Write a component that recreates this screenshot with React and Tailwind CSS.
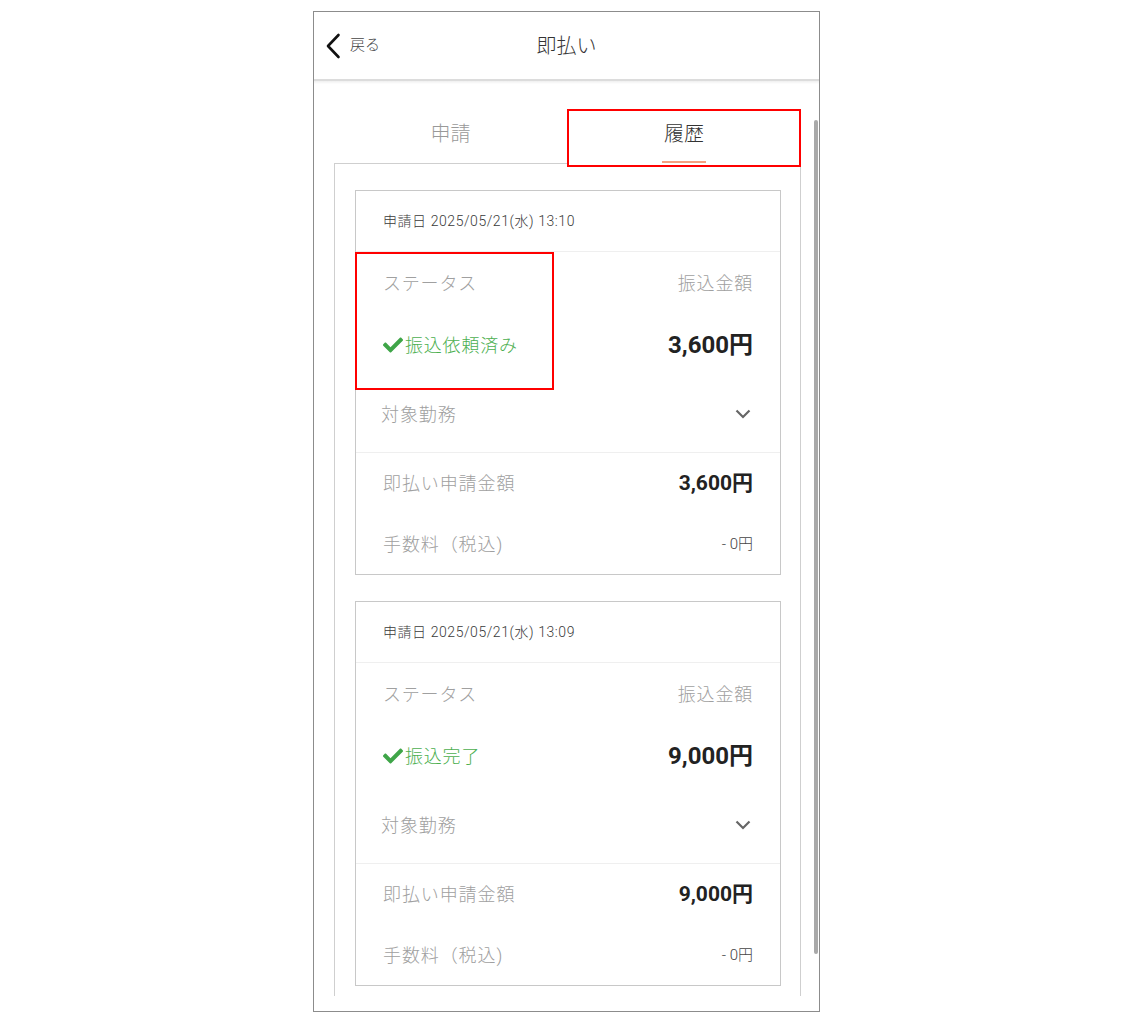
import React from 'react'

const records = [
    { date: '2025/05/21(水) 13:10', status: '振込依頼済み', amount: '3,600円', fee: '- 0円', marked: true },
    { date: '2025/05/21(水) 13:09', status: '振込完了', amount: '9,000円', fee: '- 0円', marked: false },
]

function Check() {
    return (
        <svg viewBox="0 0 512 512" className="w-[20px] h-[20px] mr-[2px]" fill="#3fa548">
            <path d="M173.9 439.4l-166.4-166.4c-10-10-10-26.2 0-36.2l36.2-36.2c10-10 26.2-10 36.2 0L192 312.7 432.1 72.6c10-10 26.2-10 36.2 0l36.2 36.2c10 10 10 26.2 0 36.2L210.1 439.4c-10 10-26.2 10-36.2 0z" />
        </svg>
    )
}

function HistoryCard({ record }) {
    return (
        <div className="relative border border-[#c8c8c8] bg-white">
            {/* annotation */}
            {record.marked && (
                <div className="absolute left-[-1px] top-[61px] w-[199px] h-[138px] border-2 border-[#ff0000] pointer-events-none" />
            )}
            <div className="h-[61px] flex items-center px-[27px] text-[14px] tracking-[0.04em] text-[#3a3a3a] font-light border-b border-[#efefef]">
                申請日 {record.date}
            </div>
            <div className="px-[27px] tracking-[0.05em]">
                <div className="h-[62px] flex items-center justify-between text-[18px] font-light text-[#a0a0a0]">
                    <span>ステータス</span>
                    <span>振込金額</span>
                </div>
                <div className="h-[62px] flex items-center justify-between">
                    <span className="flex items-center text-[18px] font-light text-[#4caf50]">
                        <Check />
                        {record.status}
                    </span>
                    <span className="text-[24px] font-bold text-[#222] tracking-normal">{record.amount}</span>
                </div>
            </div>
            <div className="h-[77px] flex items-center justify-between pl-[25px] pr-[29px] border-b border-[#efefef]">
                <span className="text-[18px] tracking-[0.05em] font-light text-[#a0a0a0]">対象勤務</span>
                <svg viewBox="0 0 16 10" className="w-[16px] h-[10px]" fill="none" stroke="#666" strokeWidth="2.2">
                    <path d="M1.5 1.5 8 8l6.5-6.5" />
                </svg>
            </div>
            <div className="px-[27px]">
                <div className="h-[61px] flex items-center justify-between">
                    <span className="text-[18px] tracking-[0.05em] font-light text-[#a0a0a0]">即払い申請金額</span>
                    <span className="text-[21px] font-bold text-[#222]">{record.amount}</span>
                </div>
                <div className="h-[60px] flex items-center justify-between">
                    <span className="text-[18px] tracking-[0.05em] font-light text-[#a0a0a0]">手数料（税込)</span>
                    <span className="text-[15px] font-light text-[#444]">{record.fee}</span>
                </div>
            </div>
        </div>
    )
}

export default function App() {
    return (
        <div className="min-h-[1021px] bg-white pt-[11px] font-['Roboto','Noto_Sans_CJK_JP',sans-serif]">
            <div className="ml-[313px] w-[507px] h-[1001px] border border-[#8c8c8c] flex flex-col overflow-hidden">
                {/* Header */}
                <div className="h-[67px] flex items-center relative shrink-0">
                    <div className="flex items-center pl-[11px] gap-[9px]">
                        <svg viewBox="0 0 16 26" className="w-[16px] h-[26px]" fill="none" stroke="#111" strokeWidth="2.6" strokeLinecap="round" strokeLinejoin="round">
                            <path d="M13.5 2 3 13l10.5 11" />
                        </svg>
                        <span className="text-[15px] font-light text-[#444]">戻る</span>
                    </div>
                    <div className="absolute inset-x-0 text-center text-[20px] font-light text-[#333] pointer-events-none">即払い</div>
                </div>
                <div className="h-[2px] bg-[#dcdcdc] shrink-0" />
                <div className="h-[3px] bg-gradient-to-b from-[#efefef] to-white shrink-0" />

                {/* Body */}
                <div className="flex flex-1 min-h-0">
                    <div className="flex flex-col pl-[20px] w-[487px] pt-[25px] pb-[15px]">
                        <div className="flex h-[55px] shrink-0">
                            <div className="w-[233px] flex items-center justify-center border-b border-[#cfcfcf] text-[20px] font-light text-[#999] pb-[5px]">
                                申請
                            </div>
                            <div className="relative w-[234px] flex flex-col items-center justify-end">
                                <span className="text-[20px] font-light text-[#333] mb-[12px]">履歴</span>
                                <div className="w-[44px] h-[2px] bg-[#f5a07f] mb-[1px]" />
                                {/* annotation */}
                                <div className="absolute left-0 top-0 w-[234px] h-[58px] border-2 border-[#ff0000] pointer-events-none" />
                            </div>
                        </div>
                        <div className="flex-1 min-h-0 overflow-hidden border-x border-[#cfcfcf] pl-[20px] pr-[19px] pt-[26px] flex flex-col gap-[26px]">
                            {records.map((r) => (
                                <HistoryCard key={r.date} record={r} />
                            ))}
                        </div>
                    </div>
                    {/* scrollbar */}
                    <div className="flex-1 flex justify-end pr-[1px]">
                        <div className="w-[4px] mt-[36px] h-[834px] rounded-full bg-[#a9a9a9]" />
                    </div>
                </div>
            </div>
        </div>
    )
}
